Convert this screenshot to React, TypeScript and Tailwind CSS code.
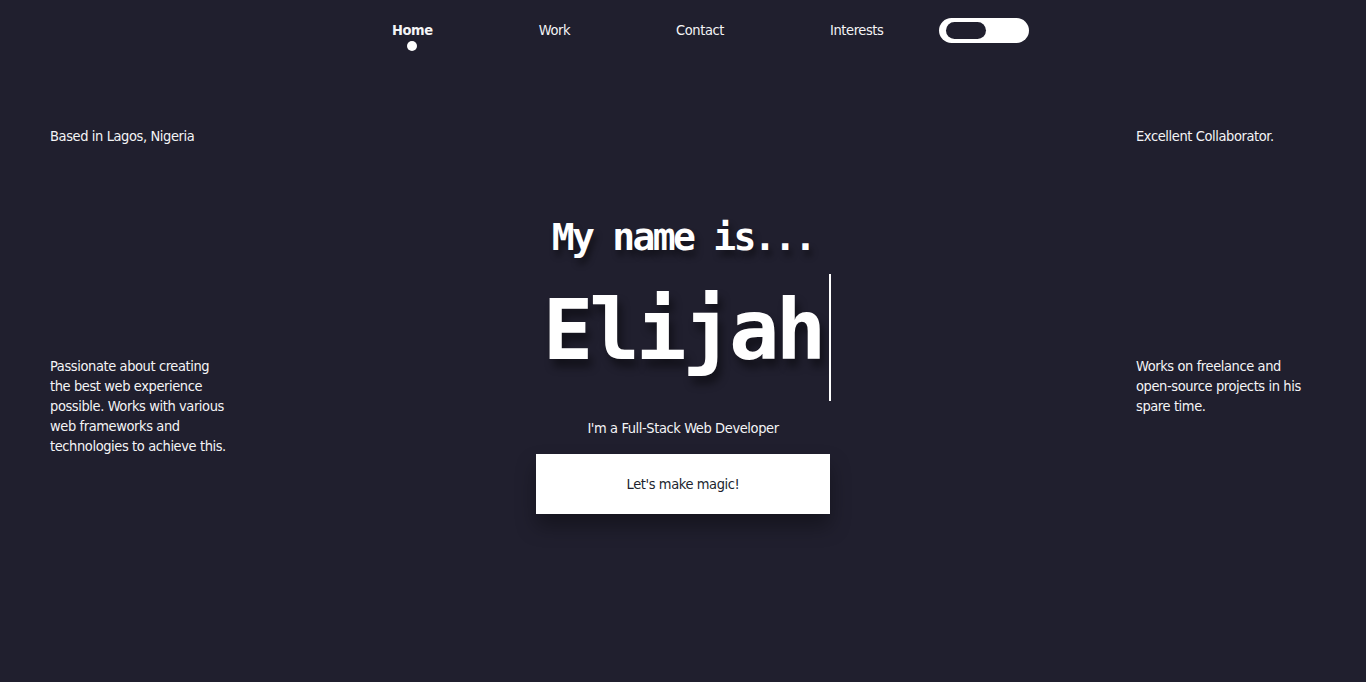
const body = "font-['DejaVu_Sans',sans-serif] [font-stretch:condensed] tracking-[-0.4px]";
const mono = "font-['DejaVu_Sans_Mono',monospace] [font-stretch:normal]";

function Nav() {
  const links = ["Home", "Work", "Contact", "Interests"];
  return (
    <nav className={`flex h-[60px] items-start pl-[392px] pt-[20px] text-[14.5px] leading-[20px] text-[#f4f4f6] ${body}`}>
      <div className="flex gap-[106px]">
        {links.map((l, i) => (
          <div key={l} className="flex flex-col items-center">
            <span className={i === 0 ? "font-bold" : ""}>{l}</span>
            {i === 0 && <span className="mt-[1px] h-[10px] w-[10px] rounded-full bg-white" />}
          </div>
        ))}
      </div>
      <button className="ml-[56px] -mt-[2px] flex h-[25px] w-[90px] items-center rounded-full bg-white pl-[7px]">
        <span className="h-[17px] w-[40px] rounded-full bg-[#201f2e]" />
      </button>
    </nav>
  );
}

export default function App() {
  return (
    <div className={`min-h-[682px] w-full bg-[#201f2e] text-[#f4f4f6] ${body}`}>
      <Nav />
      <main className="flex justify-between px-[50px] text-[14.5px] leading-[20px]">
        <div className="w-[180px] whitespace-nowrap pt-[66px]">
          <p>Based in Lagos, Nigeria</p>
          <p className="mt-[210px]">
            Passionate about creating<br />
            the best web experience<br />
            possible. Works with various<br />
            web frameworks and<br />
            technologies to achieve this.
          </p>
        </div>

        <section className="flex flex-1 flex-col items-center pt-[155px]">
          <h2 className={`${mono} text-[38px] font-bold leading-[44px] tracking-[-2.7px] text-white [text-shadow:3px_6px_6px_rgba(0,0,0,0.45)]`}>
            My name is...
          </h2>
          <div className="mt-[15px] flex h-[127px] items-center pl-[8px]">
            <h1 className={`${mono} pb-[16px] text-[84px] font-bold leading-none tracking-[-4px] text-white [text-shadow:4px_8px_8px_rgba(0,0,0,0.45)]`}>
              Elijah
            </h1>
            <span className="ml-[7px] h-[127px] w-[2px] bg-white" />
          </div>
          <p className="mt-[17px]">I'm a Full-Stack Web Developer</p>
          <button className="mt-[16px] h-[60px] w-[294px] bg-white text-[14.5px] text-[#201f2e] shadow-[0_12px_20px_rgba(0,0,0,0.35)]">
            Let's make magic!
          </button>
        </section>

        <div className="w-[180px] whitespace-nowrap pt-[66px]">
          <p>Excellent Collaborator.</p>
          <p className="mt-[210px]">
            Works on freelance and<br />
            open-source projects in his<br />
            spare time.
          </p>
        </div>
      </main>
    </div>
  );
}
